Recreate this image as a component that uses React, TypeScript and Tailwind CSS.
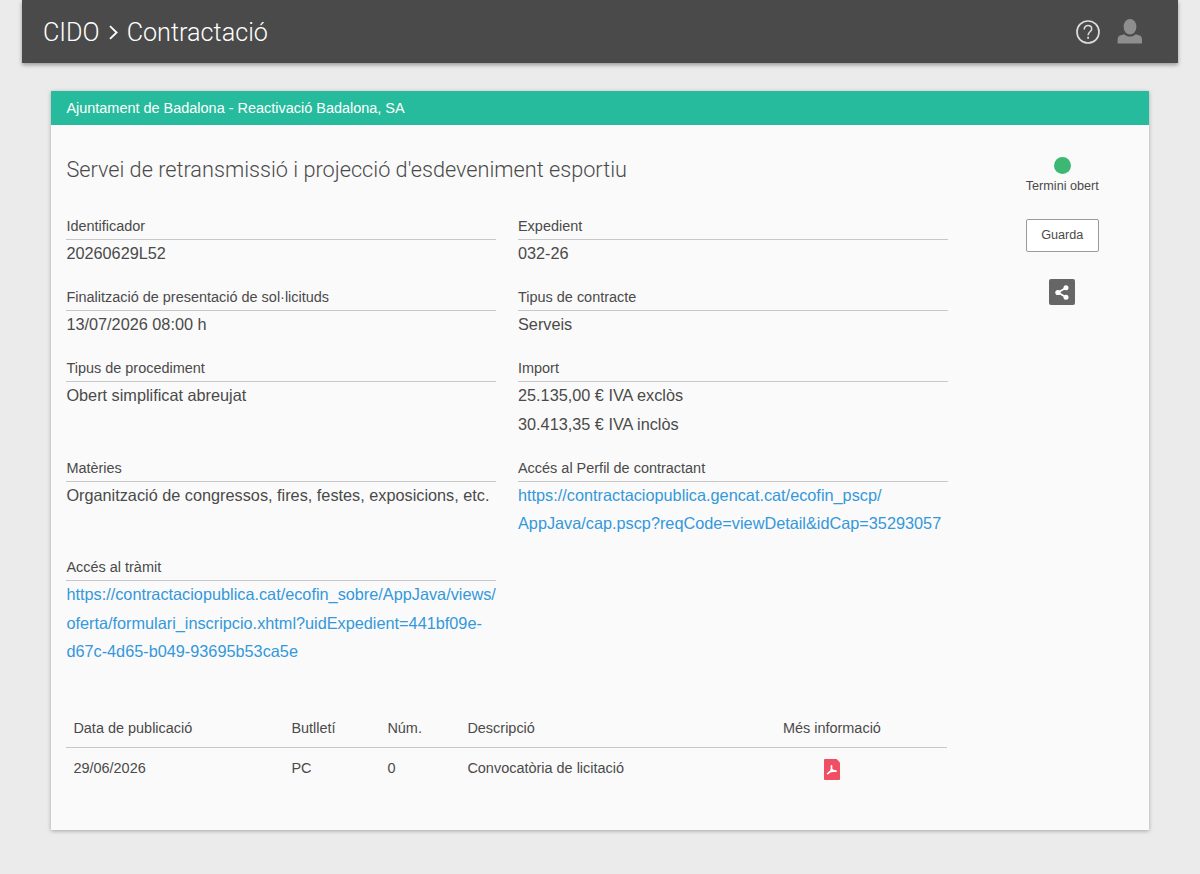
import React from "react";

type Field = {
  label: string;
  lines: string[];
  link?: boolean;
};

const fields: Field[] = [
  { label: "Identificador", lines: ["20260629L52"] },
  { label: "Expedient", lines: ["032-26"] },
  {
    label: "Finalització de presentació de sol·licituds",
    lines: ["13/07/2026 08:00 h"],
  },
  { label: "Tipus de contracte", lines: ["Serveis"] },
  { label: "Tipus de procediment", lines: ["Obert simplificat abreujat"] },
  {
    label: "Import",
    lines: ["25.135,00 € IVA exclòs", "30.413,35 € IVA inclòs"],
  },
  {
    label: "Matèries",
    lines: ["Organització de congressos, fires, festes, exposicions, etc."],
  },
  {
    label: "Accés al Perfil de contractant",
    lines: [
      "https://contractaciopublica.gencat.cat/ecofin_pscp/",
      "AppJava/cap.pscp?reqCode=viewDetail&idCap=35293057",
    ],
    link: true,
  },
  {
    label: "Accés al tràmit",
    lines: [
      "https://contractaciopublica.cat/ecofin_sobre/AppJava/views/",
      "oferta/formulari_inscripcio.xhtml?uidExpedient=441bf09e-",
      "d67c-4d65-b049-93695b53ca5e",
    ],
    link: true,
  },
];

function Header() {
  return (
    <header className="mx-[22px] flex h-[63px] items-center justify-between bg-[#4a4a4a] pr-[36px] pl-[21px] shadow-[0_2px_4px_rgba(0,0,0,0.35)]">
      <div className="flex items-center pt-[2px] font-['Roboto',sans-serif] text-[25.2px] font-light text-white">
        <a href="#">CIDO</a>
        <svg
          className="mx-[9px] h-[15px] w-[9px]"
          viewBox="0 0 9 15"
          fill="none"
          stroke="currentColor"
          strokeWidth="1.8"
        >
          <path d="M1 1.2 7.6 7.5 1 13.8" />
        </svg>
        <a href="#">Contractació</a>
      </div>
      <div className="flex items-center gap-[17px]">
        <svg className="h-6 w-6" viewBox="0 0 24 24" fill="none" stroke="#dcdcdc">
          <circle cx="12" cy="12" r="11" strokeWidth="1.7" />
          <path
            d="M8.2 9.4C8.2 7 9.8 5.6 12 5.6s3.7 1.3 3.7 3.3c0 2.8-3.6 3-3.6 6.3"
            strokeWidth="1.5"
          />
          <path d="M12.1 16.8v2" strokeWidth="1.8" />
        </svg>
        <svg className="h-[26px] w-[25px]" viewBox="-0.6 0.6 25 26" fill="#8e8e8e">
          <ellipse cx="12.4" cy="8.3" rx="6.4" ry="7.7" />
          <path d="M0 25v-3.8c0-2.3 1.2-3.9 3.2-4.4l3.5-.9c1.6 1.6 3.5 2.3 5.7 2.3s4.1-.7 5.7-2.3l3.3.9c2 .5 3 2.1 3 4.4V25Z" />
        </svg>
      </div>
    </header>
  );
}

function FieldItem({ label, lines, link }: Field) {
  return (
    <div className="mb-[16.5px]">
      <dt className="h-[27px] border-b border-[#c8c8c8] text-[14.46px] leading-[26px]">
        {label}
      </dt>
      <dd
        className={
          link
            ? "-mt-px text-[16.28px] leading-[28.5px] text-[#3498db]"
            : "-mt-px text-[16.28px] leading-[28.5px]"
        }
      >
        {lines.map((line) => (
          <span key={line} className="block whitespace-nowrap">
            {line}
          </span>
        ))}
      </dd>
    </div>
  );
}

function PdfIcon() {
  return (
    <svg className="h-[21px] w-4" viewBox="0 0 16 21">
      <path
        d="M1 0h11.6L16 3.4V20a1 1 0 0 1-1 1H1a1 1 0 0 1-1-1V1a1 1 0 0 1 1-1Z"
        fill="#f04e63"
      />
      <path
        d="M7.5 6.8v3.6M7.5 10.4c-.5 2-2 3.3-3.9 4.3M7.5 10.4c.9 1.1 2.2 1.8 4.5 1.8M5.5 12.9c2-.8 4-1.1 6.5-.7"
        fill="none"
        stroke="#fff"
        strokeWidth="1.7"
        strokeLinecap="round"
      />
    </svg>
  );
}

function Publications() {
  return (
    <table className="mt-[27px] w-[881px] table-fixed text-left text-[14.46px]">
      <colgroup>
        <col className="w-[218px]" />
        <col className="w-[96px]" />
        <col className="w-[80px]" />
        <col className="w-[304px]" />
        <col className="w-[183px]" />
      </colgroup>
      <thead>
        <tr className="h-[38px] border-b border-[#c8c8c8]">
          <th className="pt-[2px] pl-[7px] font-normal">Data de publicació</th>
          <th className="pt-[2px] pl-[7px] font-normal">Butlletí</th>
          <th className="pt-[2px] pl-[7px] font-normal">Núm.</th>
          <th className="pt-[2px] pl-[7px] font-normal">Descripció</th>
          <th className="pt-[2px] pr-[48px] text-center font-normal">
            Més informació
          </th>
        </tr>
      </thead>
      <tbody>
        <tr className="h-[44px]">
          <td className="pl-[7px]">29/06/2026</td>
          <td className="pl-[7px]">PC</td>
          <td className="pl-[7px]">0</td>
          <td className="pl-[7px]">Convocatòria de licitació</td>
          <td className="pr-[48px]">
            <a href="#" className="flex justify-center">
              <PdfIcon />
            </a>
          </td>
        </tr>
      </tbody>
    </table>
  );
}

function Actions() {
  return (
    <aside className="flex w-[73px] flex-col items-center pt-8 text-[12.65px]">
      <span className="h-[17px] w-[17px] rounded-full bg-[#3cb873]" />
      <p className="mt-[3px] leading-[18px] whitespace-nowrap">Termini obert</p>
      <button className="mt-6 h-[33px] w-[73px] rounded-[2px] border border-[#9a9a9a] bg-white pb-px">
        Guarda
      </button>
      <button className="mt-[27px] flex h-[26px] w-[26px] items-center justify-center rounded-[2px] bg-[#666]">
        <svg className="h-[15px] w-[14px]" viewBox="0 0 14 15" fill="#fff">
          <circle cx="2.9" cy="7.5" r="2.6" />
          <circle cx="11" cy="2.8" r="2.5" />
          <circle cx="11" cy="12.2" r="2.5" />
          <path d="M11 2.8 3 7.5l8 4.7" fill="none" stroke="#fff" strokeWidth="1.7" />
        </svg>
      </button>
    </aside>
  );
}

export default function App() {
  return (
    <div className="h-[874px] overflow-hidden bg-[#ebebeb] font-['Liberation_Sans',Arial,sans-serif] text-[#4a4a4a]">
      <Header />
      <main className="mx-[51px] mt-7 h-[739px] bg-[#fafafa] shadow-[0_1px_4px_rgba(0,0,0,0.3)]">
        <div className="h-[34px] bg-[#27bb9d] px-[15.4px] text-[14.46px] leading-[34px] text-white">
          Ajuntament de Badalona - Reactivació Badalona, SA
        </div>
        <div className="flex pl-[15.4px]">
          <section className="w-[882px]">
            <h1 className="mt-[30px] font-['Roboto',sans-serif] text-[21.7px] leading-[30px] font-light">
              Servei de retransmissió i projecció d'esdeveniment esportiu
            </h1>
            <dl className="mt-7 grid grid-cols-[430px_430px] gap-x-[21.6px]">
              {fields.map((field) => (
                <FieldItem key={field.label} {...field} />
              ))}
            </dl>
            <Publications />
          </section>
          <div className="ml-[77.4px]">
            <Actions />
          </div>
        </div>
      </main>
    </div>
  );
}
